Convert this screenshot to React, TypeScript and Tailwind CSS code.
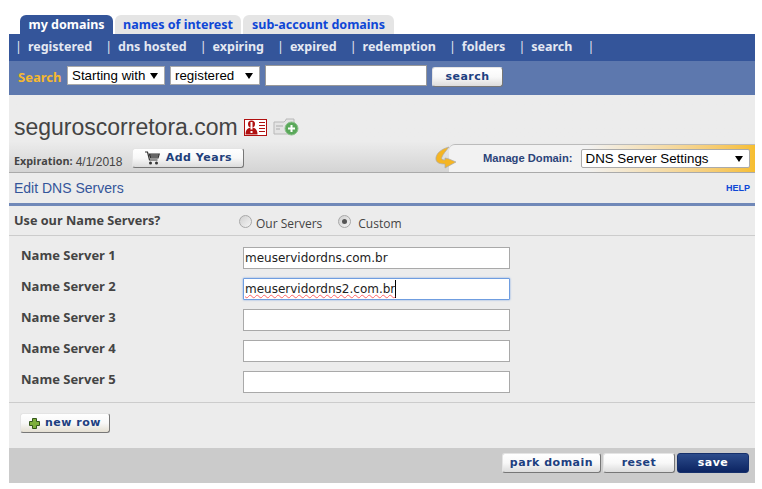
const tabFont = "font-['Noto_Sans','Liberation_Sans',sans-serif]"

const navItems = ['registered', 'dns hosted', 'expiring', 'expired', 'redemption', 'folders', 'search']
const servers = [
  { label: 'Name Server 1', value: 'meuservidordns.com.br' },
  { label: 'Name Server 2', value: 'meuservidordns2.com.br', active: true },
  { label: 'Name Server 3', value: '' },
  { label: 'Name Server 4', value: '' },
  { label: 'Name Server 5', value: '' },
]

function PixelButton({ children, className = '' }: { children: React.ReactNode; className?: string }) {
  return (
    <button
      className={`flex items-center justify-center rounded-[3px] border border-[#e4e4e4] border-r-[#777] border-b-[#777] bg-gradient-to-b from-white via-[#f8f8f8] to-[#dcdcdc] font-['DejaVu_Sans',sans-serif] text-[11px] font-bold tracking-[0.5px] text-[#1d4080] ${className}`}
    >
      {children}
    </button>
  )
}

function FakeSelect({ label, className = '' }: { label: string; className?: string }) {
  return (
    <div
      className={`relative flex items-center bg-white font-['Liberation_Sans',sans-serif] text-[13.33px] text-black ${className}`}
    >
      {label}
      <span className="absolute right-[6px] top-1/2 h-0 w-0 -translate-y-1/2 border-x-[4px] border-t-[6px] border-x-transparent border-t-black" />
    </div>
  )
}

function Radio({ checked }: { checked?: boolean }) {
  return (
    <span className="flex h-[13px] w-[13px] items-center justify-center rounded-full border border-[#a8a8a8] bg-gradient-to-br from-[#d0d0d0] to-[#f4f4f4]">
      {checked && <span className="h-[5px] w-[5px] rounded-full bg-[#555]" />}
    </span>
  )
}

function AlertCard() {
  return (
    <svg width="23" height="17" viewBox="0 0 23 17">
      <rect x="0.5" y="0.5" width="22" height="16" fill="#fff" stroke="#b01010" />
      <circle cx="7.500" cy="5" r="3.500" fill="#b01010" />
      <path d="M1.500 15.500c0-5 2.500-7 6-7s6 2 6 7z" fill="#b01010" />
      <rect x="6.500" y="3" width="2" height="7.500" fill="#fff" />
      <rect x="6.500" y="12" width="2" height="2" fill="#fff" />
      <path d="M15 3.500h6M15 6.500h6M15 9.500h6M15 12.500h6" stroke="#b01010" />
    </svg>
  )
}

function FolderPlus() {
  return (
    <svg width="26" height="18" viewBox="0 0 26 18">
      <path d="M1 4h10l2-2V1h8v6H17v9H1z" fill="#e4e4e4" stroke="#b8b8b8" />
      <path d="M3 8h7M3 11h4" stroke="#c8c8c8" strokeWidth="2" />
      <circle cx="18.500" cy="10.500" r="6.500" fill="#5aa85a" stroke="#8cc08c" />
      <path d="M18.500 7v7M15 10.500h7" stroke="#fff" strokeWidth="2" />
    </svg>
  )
}

function Cart() {
  return (
    <svg width="15" height="14" viewBox="0 0 15 14">
      <path d="M0 1h2.500l2 8h8" fill="none" stroke="#333" strokeWidth="1.200" />
      <path d="M3.500 2.500H15l-1.500 5H5z" fill="#333" />
      <path d="M5.500 4h8M6 6h7" stroke="#ddd" strokeWidth="0.600" />
      <circle cx="5.500" cy="12" r="1.500" fill="#333" />
      <circle cx="11.500" cy="12" r="1.500" fill="#333" />
    </svg>
  )
}

function ManageArrow() {
  return (
    <svg width="22" height="24" viewBox="0 0 22 24" className="relative z-10 shrink-0">
      <path d="M14 1C6 3 0 8 1 14c1 3 4 4 9 4v4l11-6-7-3-4-1v2c-3 0-4-1-3-3 1-3 4-6 7-10z" fill="#f5b523" stroke="#aaa" strokeWidth="0.700" />
    </svg>
  )
}

export default function App() {
  return (
    <div className="h-[489px] w-[762px] overflow-hidden bg-white pl-[9px] pr-[7px] pt-[15px] font-['Liberation_Sans',sans-serif]">
      {/* Tabs */}
      <div className={`flex h-[19px] gap-[2px] pl-[11px] text-[12.5px] font-bold leading-[19px] ${tabFont}`}>
        <div className="w-[93px] rounded-t-[6px] bg-[#34559a] text-center text-white">my domains</div>
        <div className="w-[126px] rounded-t-[6px] bg-[#e5e5e5] text-center text-[#0f47d6]">names of interest</div>
        <div className="w-[151px] rounded-t-[6px] bg-[#e5e5e5] text-center text-[#0f47d6]">sub-account domains</div>
      </div>

      {/* Nav */}
      <div className={`flex h-[27px] items-center bg-[#34559a] pl-[6px] text-[12.5px] font-bold text-[#e4e8f2] ${tabFont}`}>
        {navItems.map((item) => (
          <span key={item} className="flex items-center">
            <span className="font-normal">|</span>
            <span className="ml-[6px] mr-[13px]">{item}</span>
          </span>
        ))}
        <span className="ml-[2px] font-normal">|</span>
      </div>

      {/* Search bar */}
      <div className="flex h-[34px] items-start bg-[#5d78ae] pl-[9px] pt-[4px]">
        <span className={`mt-[3px] w-[49px] text-[13px] font-bold text-[#f5b82e] ${tabFont}`}>Search</span>
        <FakeSelect label="Starting with" className="mt-[1px] h-[19px] w-[98px] border border-[#aaa] pl-[4px]" />
        <FakeSelect label="registered" className="ml-[5px] mt-[1px] h-[19px] w-[90px] border border-[#aaa] pl-[4px]" />
        <div className="ml-[5px] h-[21px] w-[162px] border border-[#999] bg-white" />
        <PixelButton className="ml-[5px] mt-[2px] h-[20px] w-[71px]">search</PixelButton>
      </div>

      {/* Domain header */}
      <div className="flex h-[78px] flex-col justify-start border-b border-b-[#aaa] bg-gradient-to-b from-[#ececec] from-60% to-[#d4d4d4]">
        <div className="mt-[15px] flex h-[34px] items-center gap-[6px] pl-[5px] text-[#444]">
          <span className="text-[23px] leading-none">seguroscorretora.com</span>
          <AlertCard />
          <FolderPlus />
        </div>
        <div className="flex h-[28px] items-end justify-between">
          <div className="flex items-center pl-[5px] text-[#444]">
            <span className="mt-[3px] font-['Open_Sans',sans-serif] text-[10.8px] font-bold">Expiration:</span>
            <span className="ml-[3px] mt-[3px] text-[12px]">4/1/2018</span>
            <PixelButton className="mb-[4px] ml-[10px] h-[20px] w-[112px] gap-[6px] text-[#223f7a]">
              <Cart /> Add Years
            </PixelButton>
          </div>
          <div className="flex items-center">
            <ManageArrow />
            <div className="-ml-[8px] flex h-[28px] w-[306px] items-center rounded-tl-[6px] border-t border-t-[#bbb] bg-gradient-to-r from-[#f2f2f2] from-45% to-[#f6be30] pl-[34px] pr-[5px]">
              <span className="whitespace-nowrap text-[11.2px] font-bold text-[#2b4379]">Manage Domain:</span>
              <FakeSelect label="DNS Server Settings" className="ml-[8px] h-[19px] w-[170px] rounded-[2px] border border-[#aaa] pl-[4px]" />
            </div>
          </div>
        </div>
      </div>

      {/* Body */}
      <div className="bg-[#ececec]">
        <div className="flex h-[33px] items-center justify-between border-b-[3px] border-b-[#7088b8] pl-[5px] pr-[5px]">
          <span className="text-[14px] text-[#34559a]">Edit DNS Servers</span>
          <span className="mt-[2px] text-[9px] font-bold text-[#0f47d6]">HELP</span>
        </div>
        <div className="flex h-[30px] items-center border-b border-b-[#ccc] pl-[5px] text-[#444]">
          <span className="w-[225px] font-['Open_Sans',sans-serif] text-[12.7px] font-bold">Use our Name Servers?</span>
          <div className="mt-[1px] flex items-center font-['Open_Sans',sans-serif] text-[12px]">
            <Radio />
            <span className="ml-[4px] mt-[5px]">Our Servers</span>
            <span className="ml-[16px]">
              <Radio checked />
            </span>
            <span className="ml-[7px] mt-[5px]">Custom</span>
          </div>
        </div>
        <div className="flex h-[167px] flex-col gap-[9px] border-b border-b-[#ccc] pl-[12px] pt-[11px]">
          {servers.map((s) => (
            <div key={s.label} className="flex h-[22px] items-center">
              <span className="-mt-[5px] w-[222px] font-['Open_Sans',sans-serif] text-[13px] font-bold text-[#444]">{s.label}</span>
              <div
                className={`flex h-[22px] w-[267px] items-center bg-white pl-[1px] font-['DejaVu_Sans',sans-serif] text-[12px] text-[#222] ${
                  s.active ? 'rounded-[1px] border border-[#6f9de0] shadow-[0_0_2px_#6f9de0]' : 'border border-[#a9a9a9]'
                }`}
              >
                {s.active ? (
                  <span className="border-r border-r-black underline decoration-red-400 decoration-wavy decoration-1">{s.value}</span>
                ) : (
                  s.value
                )}
              </div>
            </div>
          ))}
        </div>
        <div className="flex h-[45px] items-start pl-[11px] pt-[10px]">
          <PixelButton className="h-[20px] w-[90px] gap-[5px] bg-gradient-to-b from-white to-[#e4dfd2]">
            <svg width="11" height="11" viewBox="0 0 11 11">
              <path d="M3.500.5h4v3h3v4h-3v3h-4v-3h-3v-4h3z" fill="#7eaf3c" stroke="#34561c" />
            </svg>
            new row
          </PixelButton>
        </div>
      </div>

      {/* Footer */}
      <div className="flex h-[35px] items-start justify-end gap-[2px] bg-[#cbcbcb] pr-[6px] pt-[5px]">
        <PixelButton className="h-[20px] w-[99px]">park domain</PixelButton>
        <PixelButton className="h-[20px] w-[72px]">reset</PixelButton>
        <button className="flex h-[20px] w-[72px] items-center justify-center rounded-[3px] border border-[#16306b] bg-gradient-to-b from-[#2d4c8c] to-[#0c2462] font-['DejaVu_Sans',sans-serif] text-[11px] font-bold tracking-[0.5px] text-white">
          save
        </button>
      </div>
    </div>
  )
}
